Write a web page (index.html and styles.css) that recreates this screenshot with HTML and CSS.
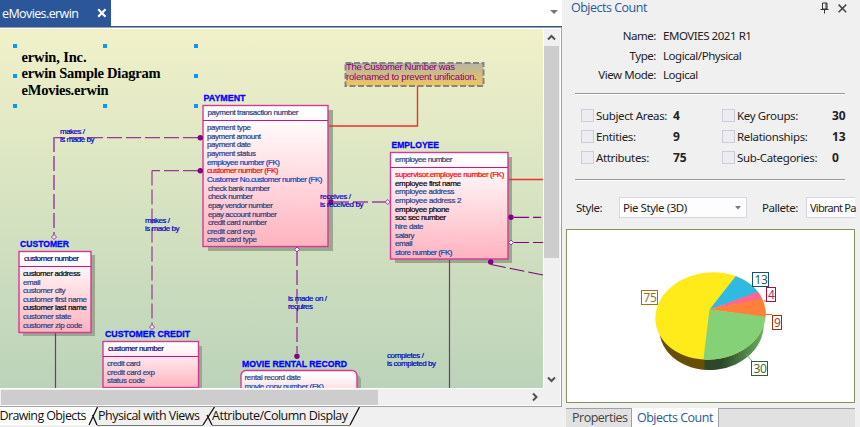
FILE: index.html
```html
<!DOCTYPE html>
<html lang="en">
<head>
<meta charset="utf-8">
<title>eMovies.erwin</title>
<link rel="stylesheet" href="styles.css">
</head>
<body>
<div class="app">
  <main class="editor">
    <header class="doc-tabs">
      <div class="doc-tab"><span>eMovies.erwin</span>
        <svg width="10" height="10" viewBox="0 0 10 10"><path d="M1.2 1.2 8.5 8.8M8.5 1.2 1.2 8.8" stroke="#fff" stroke-width="2.1"/></svg>
      </div>
      <svg class="doc-menu" width="8" height="4" viewBox="0 0 8 4"><path d="M0 0h8L4 4z" fill="#777"/></svg>
    </header>
    <div class="frame">
      <svg class="canvas" width="543" height="359" viewBox="0 29 543 359">
        <defs>
          <linearGradient id="paper" x2="0" y2="1"><stop offset="0" stop-color="#f0f1c9"/><stop offset="1" stop-color="#bbd3b9"/></linearGradient>
          <linearGradient id="pink" x2="0" y2="1"><stop offset="0" stop-color="#fff"/><stop offset=".15" stop-color="#fff8f9"/><stop offset="1" stop-color="#ffb2bf"/></linearGradient>
          <linearGradient id="noteFill" x2="0" y2="1"><stop offset="0" stop-color="#b4b4a4"/><stop offset="1" stop-color="#f1c65c"/></linearGradient>
        </defs>
        <rect y="29" width="543" height="359" fill="url(#paper)"/>

        <g class="title">
          <text x="21.5" y="62" textLength="65">erwin, Inc.</text>
          <text x="21.5" y="78" textLength="139">erwin Sample Diagram</text>
          <text x="21.5" y="94.5" textLength="87">eMovies.erwin</text>
        </g>
        <path fill="#0a95ff" d="M13 44h4v4h-4zM103 44h4v4h-4zM194 44h4v4h-4zM13 74h4v4h-4zM194 74h4v4h-4zM13 104h4v4h-4zM103 104h4v4h-4zM194 104h4v4h-4z"/>

        <g class="shadow">
          <rect x="208" y="110" width="125" height="141"/>
          <rect x="395" y="157" width="117" height="106"/>
          <rect x="23" y="255" width="72" height="81"/>
          <rect x="107" y="346" width="95" height="50"/>
          <rect x="245" y="375" width="116" height="30" rx="5"/>
        </g>

        <g class="entity">
          <rect x="203" y="105.5" width="125" height="141"/><path d="M203 120.5h125"/>
          <rect x="390.5" y="152.5" width="117.5" height="106.5"/><path d="M390.5 167.5h117.5"/>
          <rect x="19" y="251.5" width="72" height="81"/><path d="M19 266.5h72"/>
          <rect x="103" y="341.5" width="95.5" height="46"/><path d="M103 356.5h95.5"/>
          <rect x="241" y="370.5" width="116" height="40" rx="5"/>
        </g>

        <g class="solid">
          <path d="M55.5 333V388M449.5 260V388"/>
          <path class="red" d="M329 126H417.5V86"/>
          <path class="red" d="M509 179.5H543"/>
        </g>
        <g class="dashed">
          <path d="M198 137.7H54"/>
          <path class="wide" d="M54 137V235"/>
          <path d="M198 170.7H152"/>
          <path d="M152 170.5V325"/>
          <path class="wide" d="M334 202H385M297 251V353"/>
          <path class="dark" d="M514 217.3H541M514 242.5H543M491 264.5L543 275"/>
        </g>
        <g fill="#800080">
          <circle cx="200.3" cy="137.7" r="2.7"/><circle cx="200.3" cy="170.7" r="2.7"/>
          <circle cx="331" cy="202" r="2.7"/><circle cx="297" cy="356.3" r="2.7"/>
          <circle cx="511" cy="217.3" r="2.7"/><circle cx="490.7" cy="262" r="2.7"/>
        </g>
        <g class="diamond">
          <path d="M54 234.5l2.5 2.5-2.5 2.5-2.5-2.5zM152 324.5l2.5 2.5-2.5 2.5-2.5-2.5zM387.7 199.5l2.5 2.5-2.5 2.5-2.5-2.5zM297 247l2.5 2.5-2.5 2.5-2.5-2.5zM511 240l2.5 2.5-2.5 2.5-2.5-2.5z"/>
        </g>

        <rect x="345.5" y="63" width="138" height="23" fill="url(#noteFill)" stroke="#848484" stroke-width="2" stroke-dasharray="6 2.5"/>
        <g class="note"><text x="346" y="69.5" textLength="109">The Customer Number was</text><text x="346" y="79.7" textLength="131">rolenamed to prevent unification.</text></g>

        <g class="name">
          <text x="203.5" y="101" textLength="42" lengthAdjust="spacingAndGlyphs">PAYMENT</text>
          <text x="391.5" y="148" textLength="47.5" lengthAdjust="spacingAndGlyphs">EMPLOYEE</text>
          <text x="20" y="247" textLength="49" lengthAdjust="spacingAndGlyphs">CUSTOMER</text>
          <text x="105" y="337" textLength="85" lengthAdjust="spacingAndGlyphs">CUSTOMER CREDIT</text>
          <text x="242" y="367" textLength="105" lengthAdjust="spacingAndGlyphs">MOVIE RENTAL RECORD</text>
        </g>

        <g class="rows">
          <text x="207.5" y="115" textLength="91">payment transaction number</text>
          <text x="207" y="130.3" textLength="44">payment type</text>
          <text x="207" y="139" textLength="54">payment amount</text>
          <text x="207" y="147.3" textLength="44">payment date</text>
          <text x="207" y="156" textLength="49">payment status</text>
          <text class="fk" x="207" y="165" textLength="73">employee number (FK)</text>
          <text class="alert" x="207" y="173" textLength="71.5">customer number (FK)</text>
          <text class="fk" x="207" y="182" textLength="115.5">Customer No.customer number (FK)</text>
          <text x="208" y="190.7" textLength="62">check bank number</text>
          <text x="208" y="199" textLength="45">check number</text>
          <text x="208" y="208" textLength="65">epay vendor number</text>
          <text x="208" y="216.7" textLength="69">epay account number</text>
          <text x="208" y="225" textLength="59">credit card number</text>
          <text x="207" y="233.7" textLength="48">credit card exp</text>
          <text x="207" y="242" textLength="50">credit card type</text>

          <text x="395" y="162" textLength="57.5">employee number</text>
          <text class="alert" x="395" y="177" textLength="109.5">supervisor.employee number (FK)</text>
          <text class="key" x="395" y="186" textLength="66">employee first name</text>
          <text x="395" y="194" textLength="59.5">employee address</text>
          <text x="395" y="203" textLength="66.5">employee address 2</text>
          <text class="key" x="395" y="212" textLength="54.5">employee phone</text>
          <text class="key" x="395" y="220" textLength="51">soc sec number</text>
          <text x="395" y="229" textLength="28.5">hire date</text>
          <text x="395" y="238" textLength="19.5">salary</text>
          <text x="395" y="246" textLength="17.5">email</text>
          <text class="fk" x="395" y="255" textLength="57.5">store number (FK)</text>

          <text class="pk" x="24" y="261" textLength="55">customer number</text>
          <text class="key" x="23" y="276" textLength="57.5">customer address</text>
          <text x="23" y="285" textLength="17.5">email</text>
          <text x="23" y="293" textLength="42.5">customer city</text>
          <text x="23" y="302" textLength="64">customer first name</text>
          <text class="key" x="23" y="310" textLength="64">customer last name</text>
          <text x="23" y="319" textLength="48.5">customer state</text>
          <text x="23" y="328" textLength="59.5">customer zip code</text>

          <text class="pk" x="108" y="351" textLength="56">customer number</text>
          <text x="107" y="366" textLength="33.5">credit card</text>
          <text x="107" y="375" textLength="48">credit card exp</text>
          <text x="107" y="383" textLength="38">status code</text>

          <text x="244.5" y="380.3" textLength="56.5">rental record date</text>
          <text class="fk" x="244.5" y="389" textLength="79.5">movie copy number (FK)</text>
        </g>

        <g class="rows verb">
          <text x="60" y="134" textLength="25">makes /</text><text x="60" y="142" textLength="34.5">is made by</text>
          <text x="145" y="223" textLength="25">makes /</text><text x="145" y="231" textLength="34.5">is made by</text>
          <text x="320" y="199" textLength="31">receives /</text><text x="320" y="207" textLength="43.5">is received by</text>
          <text x="288" y="301" textLength="39">is made on /</text><text x="288" y="309" textLength="25">requires</text>
          <text x="387" y="358" textLength="37">completes /</text><text x="387" y="366" textLength="49">is completed by</text>
        </g>
      </svg>
      <div class="vscroll">
        <svg width="15" height="17" viewBox="0 0 15 17"><path d="M4 10.5 7.5 7 11 10.5" class="chev"/></svg>
        <div class="vthumb"></div>
        <svg width="15" height="17" viewBox="0 0 15 17"><path d="M4 5.5 7.5 9 11 5.5" class="chev"/></svg>
      </div>
      <div class="hscroll">
        <div class="hthumb"></div>
        <svg width="17" height="15" viewBox="0 0 17 15"><path d="M7 3.5 10.5 7 7 10.5" class="chev"/></svg>
      </div>
    </div>
    <svg class="sheet-tabs" width="562" height="20" viewBox="0 407 562 20">
      <path d="M0 407H98L90 425H0z" fill="#fff"/>
      <g stroke="#111" stroke-width="1.3" fill="none">
        <path d="M97.5 407 89 425M92.5 415 97 425M214.5 407 203 425M207 415 212 425M359.5 407 350 425"/>
      </g>
      <path d="M97 425.5H203M212 425.5H350" stroke="#777"/>
      <g class="sheet-label">
        <text x="-.5" y="420" textLength="87">Drawing Objects</text>
        <text x="98" y="420" textLength="102">Physical with Views</text>
        <text x="212" y="420" textLength="136">Attribute/Column Display</text>
      </g>
    </svg>
  </main>

  <aside class="panel">
    <header class="panel-head">
      <h1>Objects Count</h1>
      <svg width="9" height="12" viewBox="0 0 9 12"><path d="M2.5 1H7V7H2.5zM.5 7.5H8.5M4.5 7.5V11.5M6 1V7" stroke="#333" fill="none"/></svg>
      <svg width="9" height="9" viewBox="0 0 9 9"><path d="M.6.6 8.2 8.2M8.2.6.6 8.2" stroke="#444" stroke-width="1.5"/></svg>
    </header>
    <dl class="facts">
      <dt>Name:</dt><dd>EMOVIES 2021 R1</dd>
      <dt>Type:</dt><dd>Logical/Physical</dd>
      <dt>View Mode:</dt><dd>Logical</dd>
    </dl>
    <hr>
    <div class="counts">
      <i></i><span>Subject Areas:</span><b>4</b><i></i><span>Key Groups:</span><b>30</b>
      <i></i><span>Entities:</span><b>9</b><i></i><span>Relationships:</span><b>13</b>
      <i></i><span>Attributes:</span><b>75</b><i></i><span>Sub-Categories:</span><b>0</b>
    </div>
    <hr>
    <div class="options">
      <span class="opt-label">Style:</span>
      <div class="select">Pie Style (3D)<svg width="6" height="4" viewBox="0 0 6 4"><path d="M0 0h6L3 3.5z" fill="#777"/></svg></div>
      <span class="opt-label pal">Pallete:</span>
      <div class="select cut">Vibrant Pa</div>
    </div>
    <div class="chart">
      <svg width="287" height="172" viewBox="567 230 287 172">
        <defs>
          <linearGradient id="side" gradientUnits="userSpaceOnUse" x1="703" x2="764" y1="0" y2="0"><stop offset="0" stop-color="#2c4729"/><stop offset=".3" stop-color="#2c4729"/><stop offset="1" stop-color="#6bb065"/></linearGradient>
          <clipPath id="top"><ellipse cx="710.5" cy="316" rx="55.3" ry="43.6" transform="rotate(-6 710.5 316)"/></clipPath>
          <clipPath id="base"><ellipse cx="711.5" cy="327" rx="52.3" ry="43" transform="rotate(-6 711.5 327)"/></clipPath>
        </defs>
        <g clip-path="url(#base)"><path d="M650 330H705V375H650z" fill="#684f08"/><path d="M704.5 318H770V375H704.5z" fill="url(#side)"/></g>
        <g clip-path="url(#top)">
          <rect x="650" y="265" width="120" height="100" fill="#ffea1a"/>
          <path d="M709.5 309.5 735.7 276.3 742 268H790V281z" fill="#2ebae1"/>
          <path d="M709.5 309.5 790 280V294z" fill="#ff6690"/>
          <path d="M709.5 309.5 790 293V320.5z" fill="#ff8038"/>
          <path d="M709.5 309.5 790 320V375H701.5z" fill="#84d178"/>
        </g>
        <g fill="none"><path d="M763.5 301h4" stroke="#e5446f"/><path d="M765.5 314.5h6.5" stroke="#e9654a"/><path d="M746 354l6 7" stroke="#6bb065"/></g>
        <g fill="#fff">
          <rect x="641.5" y="290.5" width="16" height="14" stroke="#a8720a"/>
          <rect x="752.5" y="272.5" width="16" height="14" stroke="#17536a"/>
          <rect x="766.5" y="287.5" width="9" height="14" stroke="#b00c38"/>
          <rect x="772.5" y="315.5" width="9" height="14" stroke="#a82c08"/>
          <rect x="751.5" y="361.5" width="16" height="14" stroke="#2f6328"/>
        </g>
        <g class="tag">
          <text x="643.5" y="301.5" fill="#a07018">75</text><text x="754.5" y="283.5" fill="#285a70">13</text>
          <text x="768" y="298.5" fill="#b02850">4</text><text x="774" y="326.5" fill="#b04020">9</text>
          <text x="753.5" y="372.5" fill="#3a6b34">30</text>
        </g>
      </svg>
    </div>
    <nav class="panel-tabs"><span>Properties</span><span class="on">Objects Count</span></nav>
  </aside>
</div>
</body>
</html>
```
FILE: styles.css
```css
* { box-sizing: border-box; }
body { margin: 0; background: #f0f0f0; overflow: hidden; font: 11.5px/16px "Noto Sans", sans-serif; color: #222; }
svg { display: block; flex: none; }
.app { display: grid; grid-template-columns: 562px 298px; width: 860px; height: 427px; }

.editor { display: flex; flex-direction: column; }
.doc-tabs { display: flex; align-items: center; justify-content: space-between; height: 27px; padding-right: 4px; background: #fff; border-bottom: 1px solid #2b579a; }
.doc-tab { display: flex; align-items: center; justify-content: space-between; width: 111px; height: 26px; padding: 0 4px 0 2px; background: #2b579a; color: #fff; font: 12.5px "Open Sans", sans-serif; letter-spacing: -.6px; }
.doc-menu { margin-top: -3px; }
.frame { display: grid; grid-template: 359px 17px / 543px 17px; width: 562px; height: 380px; padding-top: 1px; border: solid #a0a0a0; border-width: 1px 1px 1px 0; background: #fff; }
.vscroll { display: flex; flex-direction: column; margin-left: 1px; width: 16px; height: 360px; background: #f0f0f0; }
.vthumb { flex: none; width: 15px; height: 212px; margin-bottom: auto; background: #cdcdcd; }
.hscroll { grid-column: 1 / 3; display: flex; justify-content: space-between; align-items: center; height: 16px; margin-top: 1px; padding: 0 17px 0 1px; background: #f0f0f0; }
.hthumb { width: 377px; height: 15px; background: #cdcdcd; }
.chev { fill: none; stroke: #505050; stroke-width: 2; }
.sheet-label { font: 12.5px "Open Sans", sans-serif; fill: #111; }

.title { font: bold 14.5px "Liberation Serif", serif; }
.note { font: 9.5px "Liberation Sans", sans-serif; fill: #800080; }
.name { font: bold 9.5px "Liberation Sans", sans-serif; fill: #00f; stroke: #00f; stroke-width: .3; }
.rows { font: 8px "Liberation Sans", sans-serif; fill: #293e7e; stroke: #293e7e; stroke-width: .2; }
.rows .fk { fill: #0645b8; stroke: #0645b8; }
.rows .alert { fill: #f00; stroke: #f00; }
.rows .key { fill: #000; stroke: #000; }
.rows .pk { fill: #000080; stroke: #000080; }
.verb { fill: #0000c4; stroke: #0000c4; }
.shadow { fill: #9aa88e; }
.entity rect { fill: url(#pink); stroke: #cf3c98; stroke-width: 1.4; }
.entity path { stroke: #c71585; stroke-width: 1; }
.solid { fill: none; stroke: #803080; stroke-width: 1.2; }
.solid .red { stroke: #ee3028; stroke-width: 1.4; }
.dashed { fill: none; stroke: #953a95; stroke-width: 1.2; stroke-dasharray: 15 4; }
.dashed .wide { stroke: #aa68a6; stroke-width: 2; }
.dashed .dark { stroke: #800080; }
.diamond { fill: #f4eef0; stroke: #953a95; }

.panel { display: flex; flex-direction: column; padding: 0 5px 0 4px; }
.panel-head { display: flex; flex: none; align-items: center; height: 26px; padding: 0 8px 10px 5px; }
.panel-head h1 { flex: 1; margin: 0; font: 12.5px/16px "Open Sans", sans-serif; letter-spacing: -.5px; color: #2b579a; }
.panel-head svg + svg { margin-left: 9px; }
.facts { display: grid; flex: none; align-content: start; grid-template-columns: 90px 1fr; column-gap: 7px; row-gap: 3.5px; height: 65px; margin: 0; padding-top: 2px; letter-spacing: -.45px; }
.facts dt { text-align: right; }
.facts dd { margin: 0; }
hr { flex: none; width: 270px; height: 2px; margin: 2px 0 0 9px; border: 0; border-top: 1px solid #999; border-bottom: 1px solid #fff; }
.counts { display: grid; flex: none; align-content: start; grid-template-columns: 15px 77px 49px 15px 95px 20px; grid-auto-rows: 21px; align-items: center; height: 82px; padding: 10px 0 0 15px; letter-spacing: -.35px; }
.counts i { width: 13px; height: 13px; border: 1px solid #ccccdc; background: #ededf1; }
.counts b { font-size: 12px; letter-spacing: 0; }
.options { display: flex; flex: none; align-items: center; height: 48px; padding: 5px 0 0 10px; letter-spacing: -.45px; white-space: nowrap; }
.opt-label { flex: none; width: 43px; }
.pal { margin-left: 15px; width: 44px; }
.select { display: flex; flex: none; align-items: center; justify-content: space-between; width: 128px; height: 21px; padding: 0 5px 0 3px; border: 1px solid #d5d5e3; background: #fdfdfd; }
.cut { width: 49px; padding-right: 0; border-right: 0; font-size: 11px; letter-spacing: -.75px; }
.chart { flex: none; width: 289px; height: 174px; border: 1px solid #84925e; background: #fff; }
.tag { font: 12px "Noto Sans", sans-serif; letter-spacing: -.3px; }
.panel-tabs { display: flex; flex: none; height: 19px; margin-top: 5px; background: #e1e1e1; border-top: 1px solid #a0a0a0; font: 12.5px/18px "Open Sans", sans-serif; letter-spacing: -.5px; }
.panel-tabs span { width: 65px; padding-left: 6px; color: #444; }
.panel-tabs .on { width: 88px; margin-top: -1px; padding: 1px 0 0 5px; border: solid #a0a0a0; border-width: 0 1px; background: #fff; color: #2b579a; }
```
